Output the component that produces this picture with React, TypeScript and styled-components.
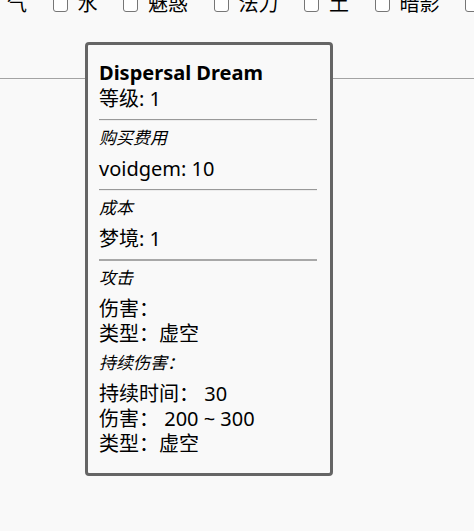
import React from "react";
import styled, { createGlobalStyle } from "styled-components";

const GlobalStyle = createGlobalStyle`
  html, body {
    margin: 0;
    padding: 0;
    background: #f9f9f9;
    overflow: hidden;
  }
  body {
    font-family: "Noto Sans", "Noto Sans CJK SC", sans-serif;
    color: #000;
  }
`;

const Page = styled.div`
  position: relative;
  display: flow-root;
  width: 474px;
  height: 531px;
  overflow: hidden;
`;

// fila de filtros por elemento, desplazada hacia arriba como en la captura
const FilterRow = styled.div`
  display: flex;
  align-items: center;
  height: 24px;
  margin-top: -8px;
  padding-left: 7px;
  font-size: 20px;
  line-height: 24px;
  white-space: nowrap;
`;

const FilterLabel = styled.span`
  margin-right: 25.5px;
`;

const Check = styled.input`
  appearance: none;
  flex: none;
  width: 15px;
  height: 15px;
  margin: 0 10px 0 0;
  border: 1px solid #767676;
  border-radius: 3px;
  background: #fff;
`;

const PageRule = styled.div`
  margin-top: 62px;
  height: 1px;
  background: #a3a3a3;
`;

const Tooltip = styled.div`
  position: absolute;
  left: 85px;
  top: 42px;
  width: 248px;
  box-sizing: border-box;
  padding: 15px 13px 17px 11px;
  border: 3px solid #656565;
  border-radius: 4px;
  background: #f9f9f9;
`;

const Title = styled.div`
  font-size: 20px;
  font-weight: 700;
  line-height: 26px;
`;

const Line = styled.div`
  font-size: 20px;
  line-height: 25px;
  white-space: pre;
`;

const Heading = styled.div`
  font-size: 17px;
  font-style: italic;
  line-height: 22px;
  margin: 6px 0 7px;
`;

const Divider = styled.hr<{ $strong?: boolean }>`
  margin: 8px 0 0;
  border: 0;
  border-top: 1px solid ${(p) => (p.$strong ? "#a8a8a8" : "#999")};
  border-bottom: 1px solid ${(p) => (p.$strong ? "#a8a8a8" : "#ececec")};
`;

const filters = ["水", "魅惑", "法力", "土", "暗影", "光"];

export default function App() {
  return (
    <Page>
      <GlobalStyle />
      <FilterRow>
        <FilterLabel>气</FilterLabel>
        {filters.map((f) => (
          <React.Fragment key={f}>
            <Check type="checkbox" />
            <FilterLabel>{f}</FilterLabel>
          </React.Fragment>
        ))}
      </FilterRow>
      <PageRule />

      <Tooltip>
        <Title>Dispersal Dream</Title>
        <Line>等级: 1</Line>
        <Divider />
        <Heading>购买费用</Heading>
        <Line>voidgem: 10</Line>
        <Divider />
        <Heading>成本</Heading>
        <Line>梦境: 1</Line>
        <Divider $strong />
        <Heading>攻击</Heading>
        <Line>伤害：</Line>
        <Line>类型：虚空</Line>
        <Heading>持续伤害：</Heading>
        <Line>持续时间： 30</Line>
        <Line>伤害： 200 ~ 300</Line>
        <Line>类型：虚空</Line>
      </Tooltip>
    </Page>
  );
}
